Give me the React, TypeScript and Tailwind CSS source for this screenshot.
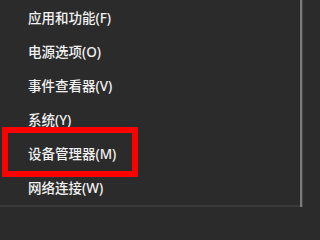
const items = [
  "应用和功能(F)",
  "电源选项(O)",
  "事件查看器(V)",
  "系统(Y)",
  "设备管理器(M)",
  "网络连接(W)",
];

export default function App() {
  return (
    <div className="min-h-screen w-full bg-[#2b2b2b]">
      <div
        className="flex w-[303px] h-[207px] bg-[#2b2b2b] overflow-hidden"
        style={{ fontFamily: '"Segoe UI", "Noto Sans", "Noto Sans CJK SC", sans-serif' }}
      >
        <div className="flex flex-1 flex-col">
          <ul className="flex-1 pt-[1px]">
            {items.map((label, i) => (
              <li
                key={label}
                className="relative flex h-[34px] items-center pl-[28px] text-[13.5px] font-medium text-[#f2f2f2]"
              >
                {label}
                {i === 4 && (
                  <span className="absolute left-[2px] top-[-10px] h-[50px] w-[136px] border-[6px] border-[#ff0000]" />
                )}
              </li>
            ))}
          </ul>
          <div className="h-[3px] bg-[#3a3a3a]" />
        </div>
        <div className="w-[2px] bg-[#7a7a7a]" />
        <div className="w-[1px] bg-[#444444]" />
      </div>
    </div>
  );
}
